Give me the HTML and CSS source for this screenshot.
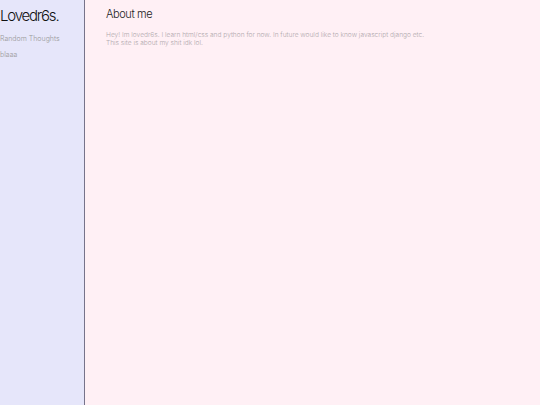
FILE: index.html
```html
<!DOCTYPE html>
<html>
<head>
<meta charset="utf-8">
<link rel="stylesheet" href="styles.css">
</head>
<body>
<div class="layout">
  <aside class="sidebar">
    <h1 class="logo">Lovedr6s.</h1>
    <nav class="nav">
      <a class="nav-link" href="#">Random Thoughts</a>
      <a class="nav-link" href="#">blaaa</a>
    </nav>
  </aside>
  <main class="content">
    <h2 class="heading">About me</h2>
    <p class="text">Hey! Im lovedr6s. I learn html/css and python for now. In future would like to know javascript django etc.<br>This site is about my shit idk lol.</p>
  </main>
</div>
</body>
</html>
```
FILE: styles.css
```css
html, body {
  margin: 0;
  padding: 0;
  height: 100%;
}
body {
  font-family: Inter, "Noto Sans", sans-serif;
  font-weight: 300;
}
.layout {
  display: flex;
  height: 405px;
}
.sidebar {
  width: 84px;
  flex: none;
  background: #e6e6fa;
  border-right: 1px solid #77738a;
}
.logo {
  margin: 6px 0 0 0;
  font-size: 15px;
  font-weight: 300;
  color: #111;
  letter-spacing: -1.2px;
  line-height: 20px;
}
.nav {
  display: flex;
  flex-direction: column;
  gap: 6px;
  margin-top: 8px;
}
.nav-link {
  font-size: 7px;
  line-height: 10px;
  color: #999;
  text-decoration: none;
}
.content {
  flex: 1;
  background: #fff0f5;
  padding: 7px 21px;
}
.heading {
  margin: 0;
  font-size: 11px;
  font-weight: 300;
  color: #222;
  line-height: 14px;
  letter-spacing: -0.4px;
}
.text {
  margin: 10px 0 0 0;
  font-size: 6.6px;
  line-height: 8px;
  color: #b0a8ac;
}
```
